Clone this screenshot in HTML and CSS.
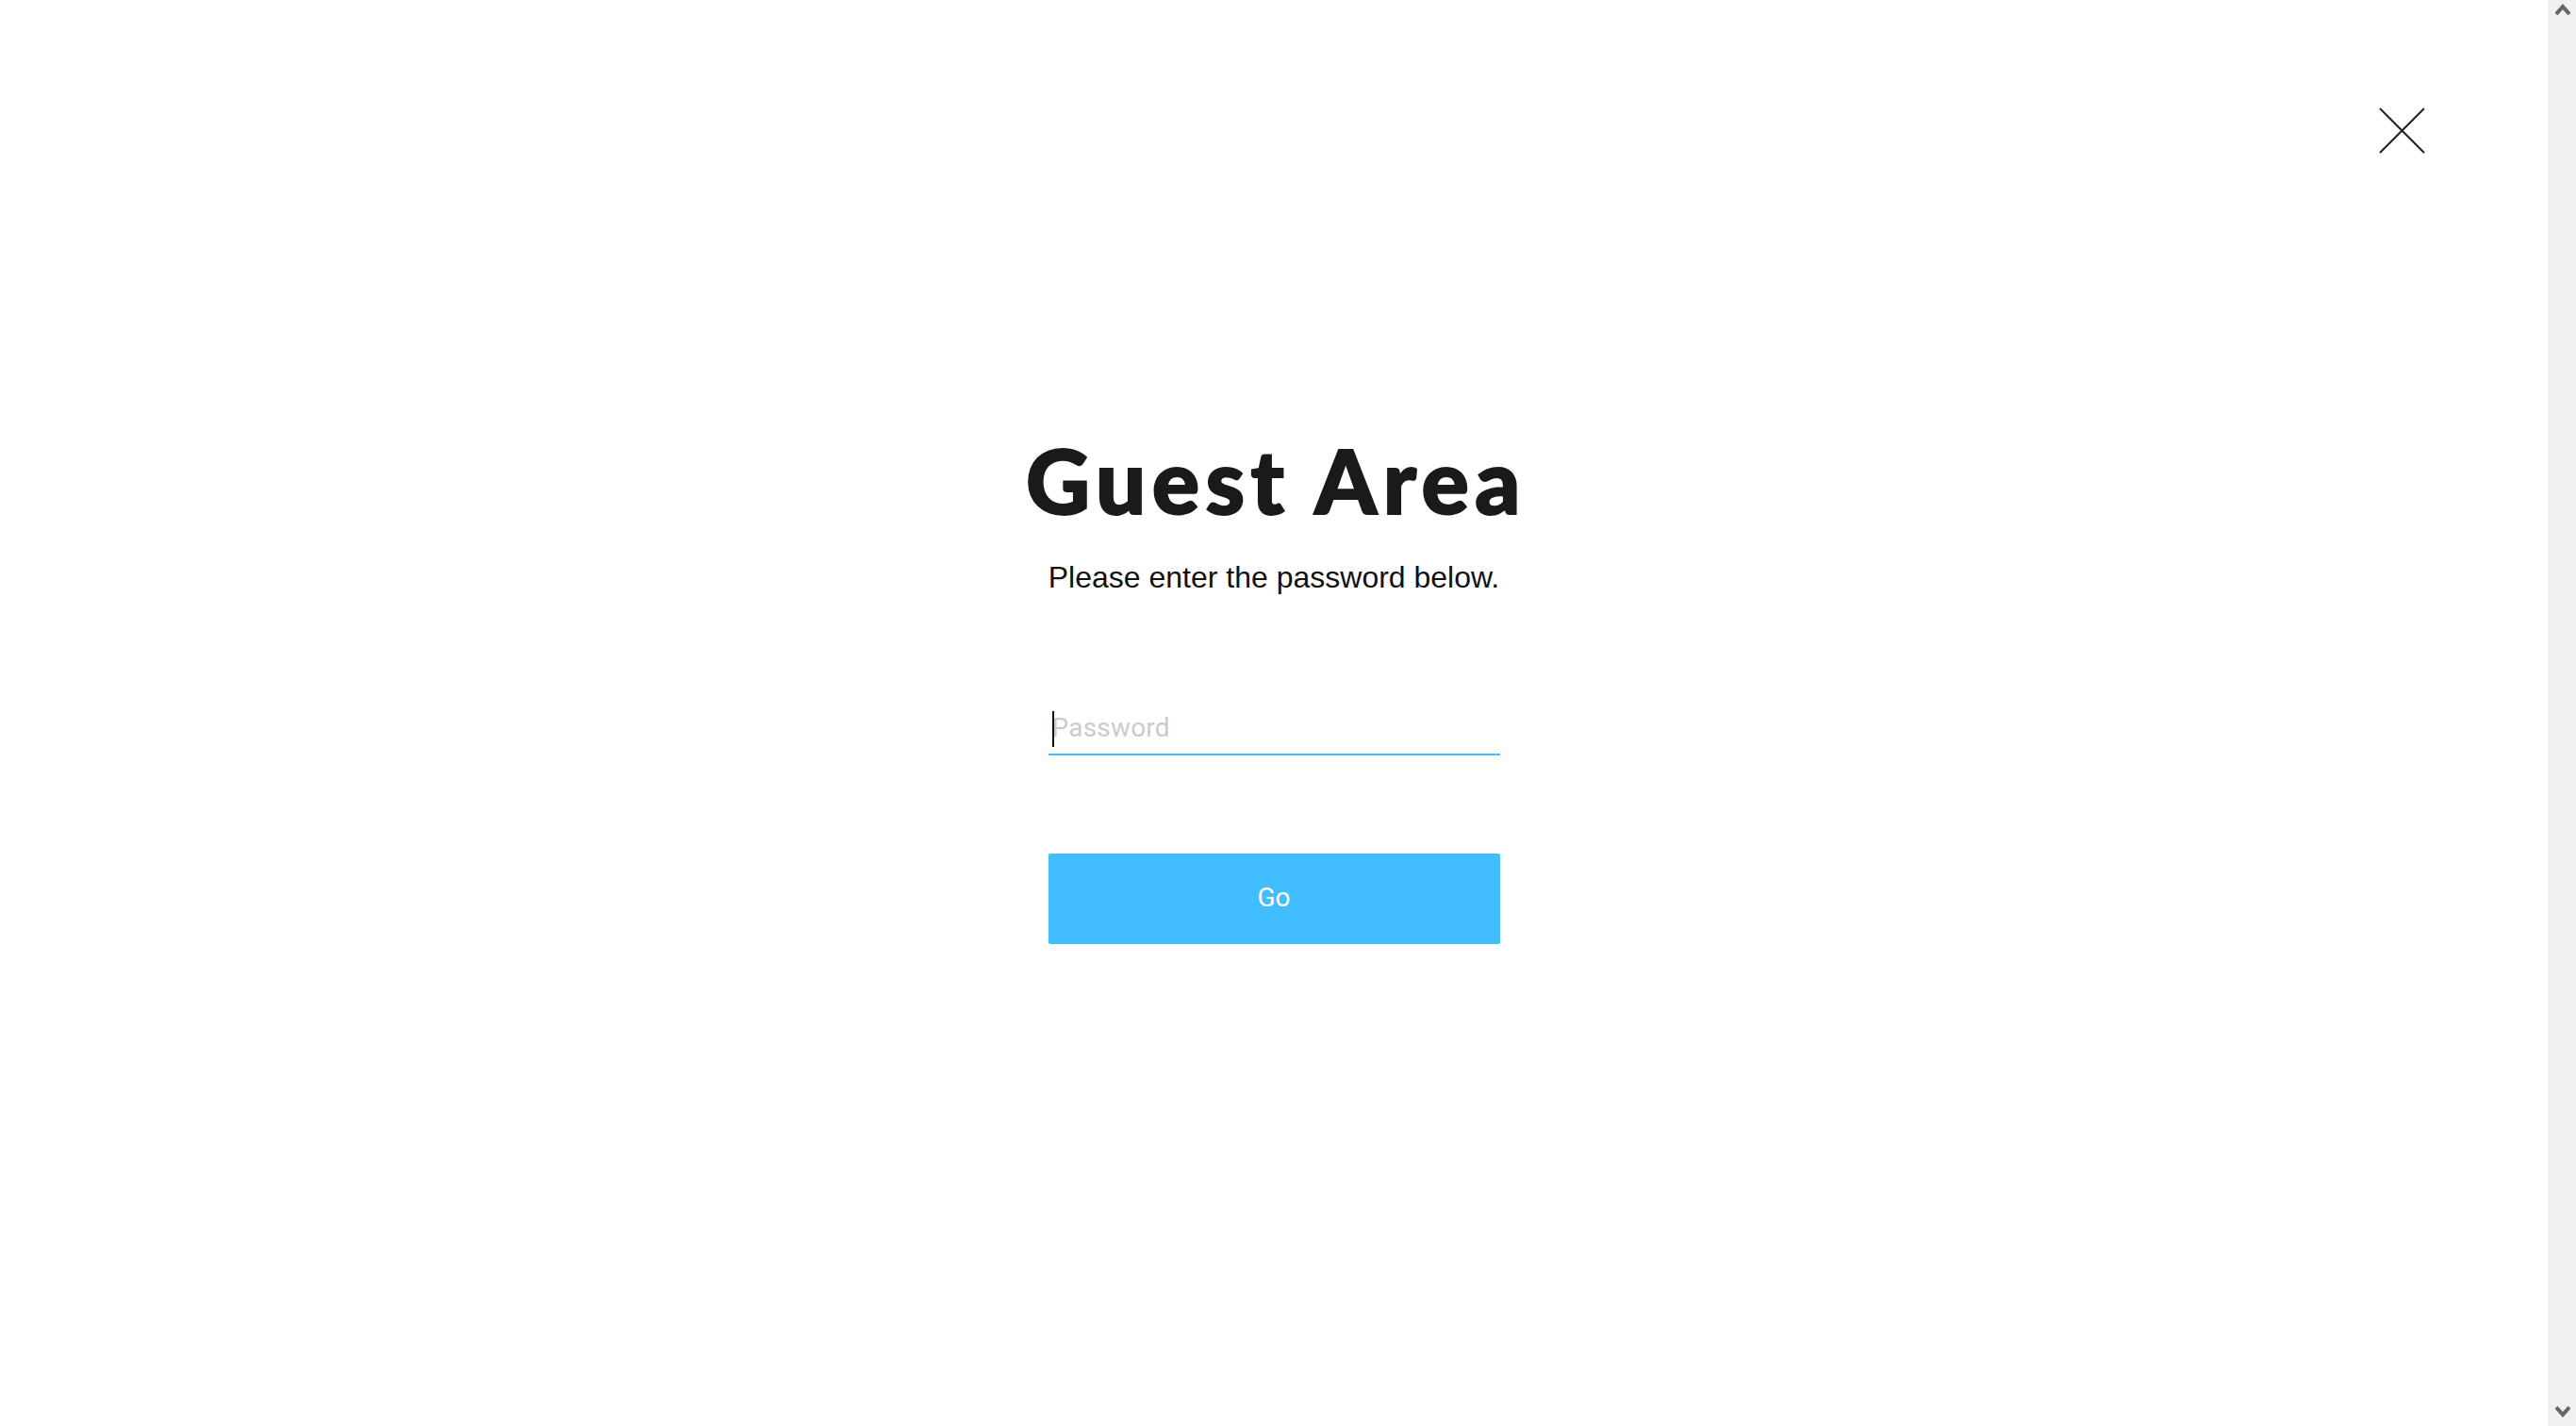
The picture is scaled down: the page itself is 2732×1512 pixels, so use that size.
FILE: index.html
```html
<!DOCTYPE html>
<html lang="en">
<head>
    <meta charset="UTF-8">
    <meta name="viewport" content="width=device-width, initial-scale=1.0">
    <title>Guest Area</title>
    <link rel="stylesheet" href="styles.css">
</head>
<body>
    <div class="page">
        <main class="guest-area">
            <button class="close-button" aria-label="Close">
                <svg width="49" height="49" viewBox="0 0 49 49">
                    <path d="M1 1L48 48M48 1L1 48" fill="none" stroke="#222" stroke-width="2"/>
                </svg>
            </button>
            <form class="login-form">
                <h1 class="login-title">Guest Area</h1>
                <p class="login-text">Please enter the password below.</p>
                <div class="password-field">
                    <span class="caret"></span>
                    <input type="password" placeholder="Password">
                </div>
                <button class="go-button" type="button">Go</button>
            </form>
        </main>
        <div class="scrollbar">
            <svg width="16" height="14" viewBox="0 0 16 14">
                <path d="M1 12L8 4L15 12" fill="none" stroke="#666" stroke-width="4"/>
            </svg>
            <svg width="16" height="14" viewBox="0 0 16 14">
                <path d="M1 2L8 10L15 2" fill="none" stroke="#666" stroke-width="4"/>
            </svg>
        </div>
    </div>
</body>
</html>
```

FILE: styles.css
```css
* {
    box-sizing: border-box;
    margin: 0;
    padding: 0;
}

html,
body {
    height: 100%;
    overflow: hidden;
}

body {
    background: white;
    color: #111;
    font-family: "Liberation Sans", Arial, sans-serif;
}

.page {
    display: flex;
    height: 100%;
}

.guest-area {
    position: relative;
    flex: 1;
    display: flex;
    justify-content: center;
    padding-top: 451px;
}

.close-button {
    position: absolute;
    top: 114px;
    right: 130px;
    display: flex;
    border: none;
    background: none;
    cursor: pointer;
}

.login-form {
    width: 479px;
    display: flex;
    flex-direction: column;
    align-items: stretch;
}

.login-title {
    margin: 0 -40px;
    padding-left: 5px;
    font-family: Lato, "Noto Sans", sans-serif;
    font-size: 94px;
    font-weight: 900;
    line-height: 116px;
    letter-spacing: 6.5px;
    -webkit-text-stroke: 2px #1a1a1a;
    text-align: center;
    white-space: nowrap;
    color: #1a1a1a;
}

.login-text {
    margin-top: 25px;
    font-size: 32px;
    line-height: 40px;
    text-align: center;
    white-space: nowrap;
}

.password-field {
    position: relative;
    margin-top: 117px;
    border-bottom: 2px solid #42bdff;
}

.caret {
    position: absolute;
    top: 5px;
    left: 4px;
    width: 2px;
    height: 38px;
    background: #111;
}

.password-field input {
    display: block;
    width: 100%;
    height: 50px;
    padding: 0 4px 6px;
    border: none;
    outline: none;
    background: none;
    font-family: Roboto, sans-serif;
    font-size: 28px;
    font-weight: 400;
    letter-spacing: 0.2px;
    caret-color: transparent;
}

.password-field input::placeholder {
    color: #cfcac7;
    opacity: 1;
}

.go-button {
    height: 96px;
    margin-top: 104px;
    padding-bottom: 4px;
    border: none;
    border-radius: 2px;
    background: #42bdff;
    color: white;
    font-family: Roboto, sans-serif;
    font-size: 28px;
    font-weight: 400;
    cursor: pointer;
}

.scrollbar {
    width: 30px;
    display: flex;
    flex-direction: column;
    justify-content: space-between;
    align-items: center;
    padding: 3px 0 8px 1px;
    background: #f0f0f0;
}
```
